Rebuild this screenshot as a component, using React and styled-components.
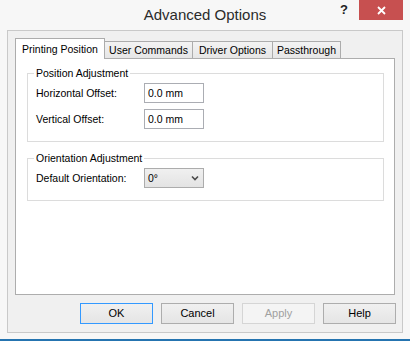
import React from "react";
import styled, { createGlobalStyle } from "styled-components";

const Global = createGlobalStyle`
  html, body { margin: 0; padding: 0; }
  body {
    width: 410px;
    height: 341px;
    overflow: hidden;
    font-family: "Liberation Sans", Arial, sans-serif;
    -webkit-font-smoothing: antialiased;
  }
  * { box-sizing: border-box; }
`;

const Window = styled.div`
  width: 410px;
  height: 341px;
  background: #f7f7f7;
  display: flex;
  flex-direction: column;
  border-bottom: 2px solid #2574b0;
`;

const TitleBar = styled.div`
  height: 30px;
  display: grid;
  grid-template-columns: 1fr auto 1fr;
  align-items: start;
`;

const Title = styled.div`
  grid-column: 2;
  font-size: 15px;
  line-height: 30px;
  color: #2b2b2b;
  white-space: nowrap;
`;

const TitleControls = styled.div`
  grid-column: 3;
  justify-self: end;
  display: flex;
  align-items: flex-start;
  margin-right: 7px;
`;

const HelpGlyph = styled.div`
  font-size: 13px;
  font-weight: bold;
  line-height: 20px;
  color: #222;
  margin-right: 11px;
`;

const CloseButton = styled.div`
  width: 44px;
  height: 20px;
  background: #c75050;
  display: flex;
  align-items: center;
  justify-content: center;
`;

const Client = styled.div`
  margin: 0 7px;
  height: 303px;
  border: 1px solid #c9c9c9;
  background: #f0f0f0;
  padding: 7px 7px 8px 7px;
  display: flex;
  flex-direction: column;
`;

const TabStrip = styled.div`
  display: flex;
  align-items: flex-end;
  height: 21px;
  margin-bottom: -1px;
  position: relative;
  z-index: 1;
`;

const Tab = styled.div`
  width: ${(p) => p.$w}px;
  height: ${(p) => (p.$active ? 21 : 17)}px;
  margin-bottom: ${(p) => (p.$active ? 0 : 1)}px;
  margin-left: ${(p) => (p.$first ? 0 : -1)}px;
  border: 1px solid #acacac;
  border-bottom: none;
  background: ${(p) =>
    p.$active ? "#ffffff" : "linear-gradient(#f3f3f3, #e6e6e6)"};
  font-size: 10.5px;
  color: #000;
  line-height: ${(p) => (p.$active ? 20 : 16)}px;
  padding-left: ${(p) => (p.$active ? 6 : 0)}px;
  text-align: ${(p) => (p.$active ? "left" : "center")};
  white-space: nowrap;
  position: relative;
  z-index: ${(p) => (p.$active ? 2 : 1)};
`;

const Panel = styled.div`
  height: 237px;
  border: 1px solid #adadad;
  background: #fff;
  padding: 8px 10px 0 11px;
  display: flex;
  flex-direction: column;
`;

const Group = styled.fieldset`
  margin: ${(p) => (p.$gap ? "10px 0 0 0" : "0")};
  padding: 3px 8px 12px 8px;
  border: 1px solid #dcdcdc;
  min-width: 0;
  display: flex;
  flex-direction: column;
  gap: 6px;
`;

const Legend = styled.legend`
  font-size: 10.5px;
  line-height: 13px;
  padding: 0 2px;
  margin-left: -2px;
  color: #000;
`;

const Row = styled.div`
  display: grid;
  grid-template-columns: 108px 60px;
  align-items: center;
  height: 20px;
`;

const Label = styled.span`
  font-size: 10.5px;
  color: #000;
  white-space: nowrap;
`;

const TextBox = styled.div`
  width: 60px;
  height: 20px;
  border: 1px solid #abadb3;
  background: #fff;
  font-size: 10.5px;
  line-height: 18px;
  padding-left: 3px;
  color: #000;
`;

const ComboBox = styled.div`
  width: 60px;
  height: 20px;
  border: 1px solid #acacac;
  background: linear-gradient(#f0f0f0, #e3e3e3);
  font-size: 10.5px;
  line-height: 18px;
  padding: 0 4px 0 3px;
  color: #000;
  display: flex;
  align-items: center;
  justify-content: space-between;
`;

const ButtonRow = styled.div`
  display: flex;
  justify-content: flex-end;
  gap: 8px;
  margin-top: 8px;
  margin-right: -1px;
`;

const Button = styled.div`
  width: 73px;
  height: 21px;
  border: 1px solid
    ${(p) => (p.$default ? "#3399ff" : p.$disabled ? "#d5d5d5" : "#adadad")};
  background: ${(p) =>
    p.$disabled ? "#f4f4f4" : "linear-gradient(#f0f0f0, #e5e5e5)"};
  color: ${(p) => (p.$disabled ? "#a0a0a0" : "#000")};
  font-size: 11px;
  line-height: 19px;
  text-align: center;
`;

const Chevron = () => (
  <svg width="8" height="6" viewBox="0 0 8 6">
    <path d="M1 1.5 L4 4.5 L7 1.5" fill="none" stroke="#4a4a4a" strokeWidth="1.6" />
  </svg>
);

const CloseX = () => (
  <svg width="9" height="9" viewBox="0 0 9 9">
    <path d="M1 1 L8 8 M8 1 L1 8" stroke="#fff" strokeWidth="1.8" />
  </svg>
);

export default function App() {
  return (
    <>
      <Global />
      <Window>
        <TitleBar>
          <Title>Advanced Options</Title>
          <TitleControls>
            <HelpGlyph>?</HelpGlyph>
            <CloseButton>
              <CloseX />
            </CloseButton>
          </TitleControls>
        </TitleBar>
        <Client>
          <TabStrip>
            <Tab $active $first $w={90}>Printing Position</Tab>
            <Tab $w={89}>User Commands</Tab>
            <Tab $w={81}>Driver Options</Tab>
            <Tab $w={69}>Passthrough</Tab>
          </TabStrip>
          <Panel>
            <Group>
              <Legend>Position Adjustment</Legend>
              <Row>
                <Label>Horizontal Offset:</Label>
                <TextBox>0.0 mm</TextBox>
              </Row>
              <Row>
                <Label>Vertical Offset:</Label>
                <TextBox>0.0 mm</TextBox>
              </Row>
            </Group>
            <Group $gap>
              <Legend>Orientation Adjustment</Legend>
              <Row>
                <Label>Default Orientation:</Label>
                <ComboBox>
                  <span>0°</span>
                  <Chevron />
                </ComboBox>
              </Row>
            </Group>
          </Panel>
          <ButtonRow>
            <Button $default>OK</Button>
            <Button>Cancel</Button>
            <Button $disabled>Apply</Button>
            <Button>Help</Button>
          </ButtonRow>
        </Client>
      </Window>
    </>
  );
}
